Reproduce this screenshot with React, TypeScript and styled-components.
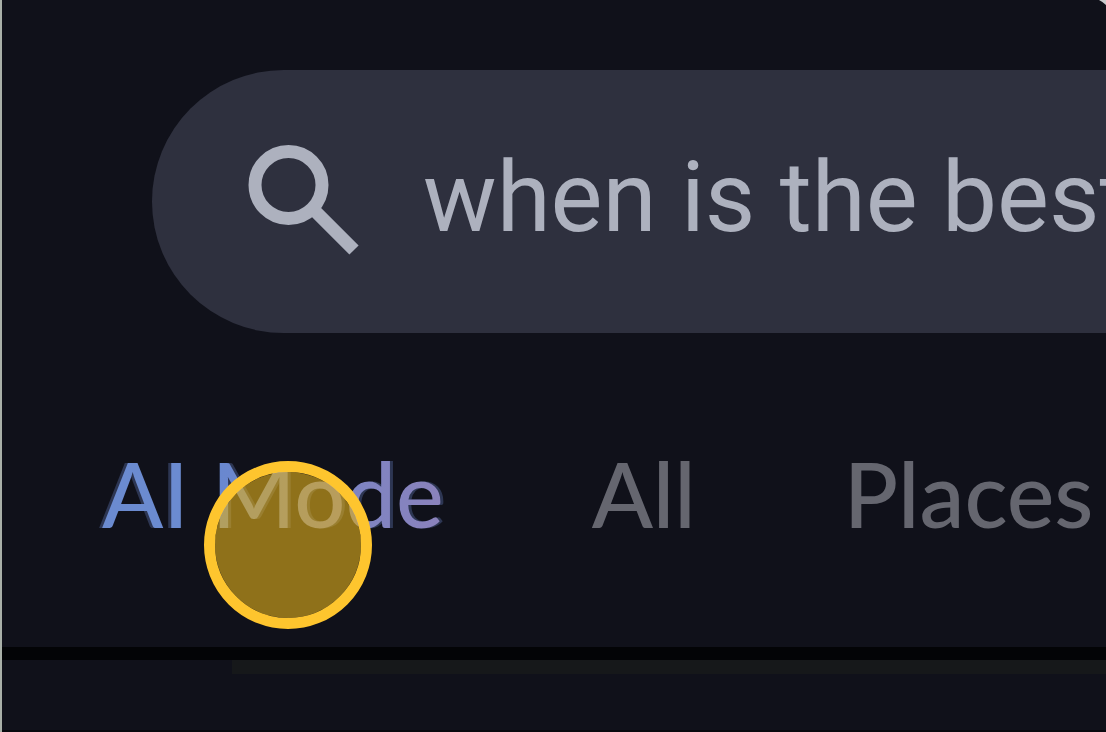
import React, { useState } from 'react';
import styled, { createGlobalStyle } from 'styled-components';

const GlobalStyle = createGlobalStyle`
  * { box-sizing: border-box; }
  html, body, #root { height: 100%; }
  body { margin: 0; background: #10111a; overflow: hidden; }
`;

const Screen = styled.main`
  position: relative;
  min-height: 100vh;
  display: flex;
  flex-direction: column;
  overflow: hidden;
  background: #10111a;
  border-left: 2px solid #a9b0a8;
`;

const Corner = styled.svg`
  position: absolute;
  top: 0;
  right: 0;
  width: 8px;
  height: 6px;
`;

const SearchBar = styled.form`
  display: flex;
  align-items: center;
  gap: 63px;
  height: 263px;
  margin: 70px 0 0 150px;
  padding: 0 0 4px 96px;
  border-radius: 132px 0 0 132px;
  background: #2e303e;
`;

const SearchIcon = styled.svg`
  flex: none;
  width: 112px;
  height: 112px;
  fill: none;
  stroke: #adb1be;
  stroke-width: 13px;
`;

const SearchInput = styled.input`
  flex: 1;
  min-width: 0;
  height: 136px;
  padding: 0 0 4px;
  border: 0;
  outline: 0;
  background: transparent;
  color: #adb1be;
  font: 400 98px/132px Roboto, sans-serif;
`;

const Tabs = styled.nav`
  display: flex;
  align-items: center;
  gap: 148px;
  height: 314px;
  padding: 6px 0 0 100px;
  white-space: nowrap;
`;

const Tab = styled.button`
  position: relative;
  flex: none;
  padding: 0;
  border: 0;
  background: transparent;
  color: #65666f;
  font: 500 90px/112px Lato, sans-serif;
`;

const Word = styled.span<{ $from: string; $to: string; $trail: string }>`
  color: transparent;
  background: linear-gradient(90deg, ${(p) => p.$from}, ${(p) => p.$to});
  background-clip: text;
  -webkit-background-clip: text;
  filter: drop-shadow(${(p) => p.$trail} 0 0 rgba(74, 92, 140, 0.5));
`;

const TouchPoint = styled.span`
  position: absolute;
  top: 24px;
  left: 102px;
  width: 168px;
  height: 168px;
  border: 11px solid #fec52e;
  border-radius: 50%;
  background: rgba(221, 172, 27, 0.62);
  background-clip: padding-box;
`;

const Divider = styled.hr`
  width: 100%;
  height: 13px;
  margin: 0;
  border: 0;
  background: #030406;
`;

const Results = styled.section`
  flex: 1;
  background: #10111a;
  border-bottom: 2px solid #08090e;
`;

const ResultsEdge = styled.div`
  height: 14px;
  margin-left: 230px;
  background: #16181a;
`;

export default function App() {
  const [query, setQuery] = useState('when is the best');
  return (
    <>
      <GlobalStyle />
      <Screen>
        <Corner viewBox="0 0 8 6" aria-hidden="true">
          <path d="M1 0H8V5Q5 2 1 0Z" fill="#c9cbcd" />
        </Corner>
        <SearchBar role="search" onSubmit={(e) => e.preventDefault()}>
          <SearchIcon viewBox="0 0 112 112" aria-hidden="true">
            <circle cx="40.5" cy="41" r="33.5" />
            <path d="M63 63L106 106" />
          </SearchIcon>
          <SearchInput
            aria-label="Search"
            value={query}
            onChange={(e) => setQuery(e.target.value)}
          />
        </SearchBar>
        <Tabs aria-label="Search modes">
          <Tab type="button">
            <Word $from="#6b8bd0" $to="#6b8bd0" $trail="-3px">AI</Word>{' '}
            <Word $from="#6888d0" $to="#8b82bb" $trail="3px">Mode</Word>
            <TouchPoint />
          </Tab>
          <Tab type="button">All</Tab>
          <Tab type="button">Places</Tab>
        </Tabs>
        <Divider />
        <Results aria-label="Results">
          <ResultsEdge />
        </Results>
      </Screen>
    </>
  );
}
